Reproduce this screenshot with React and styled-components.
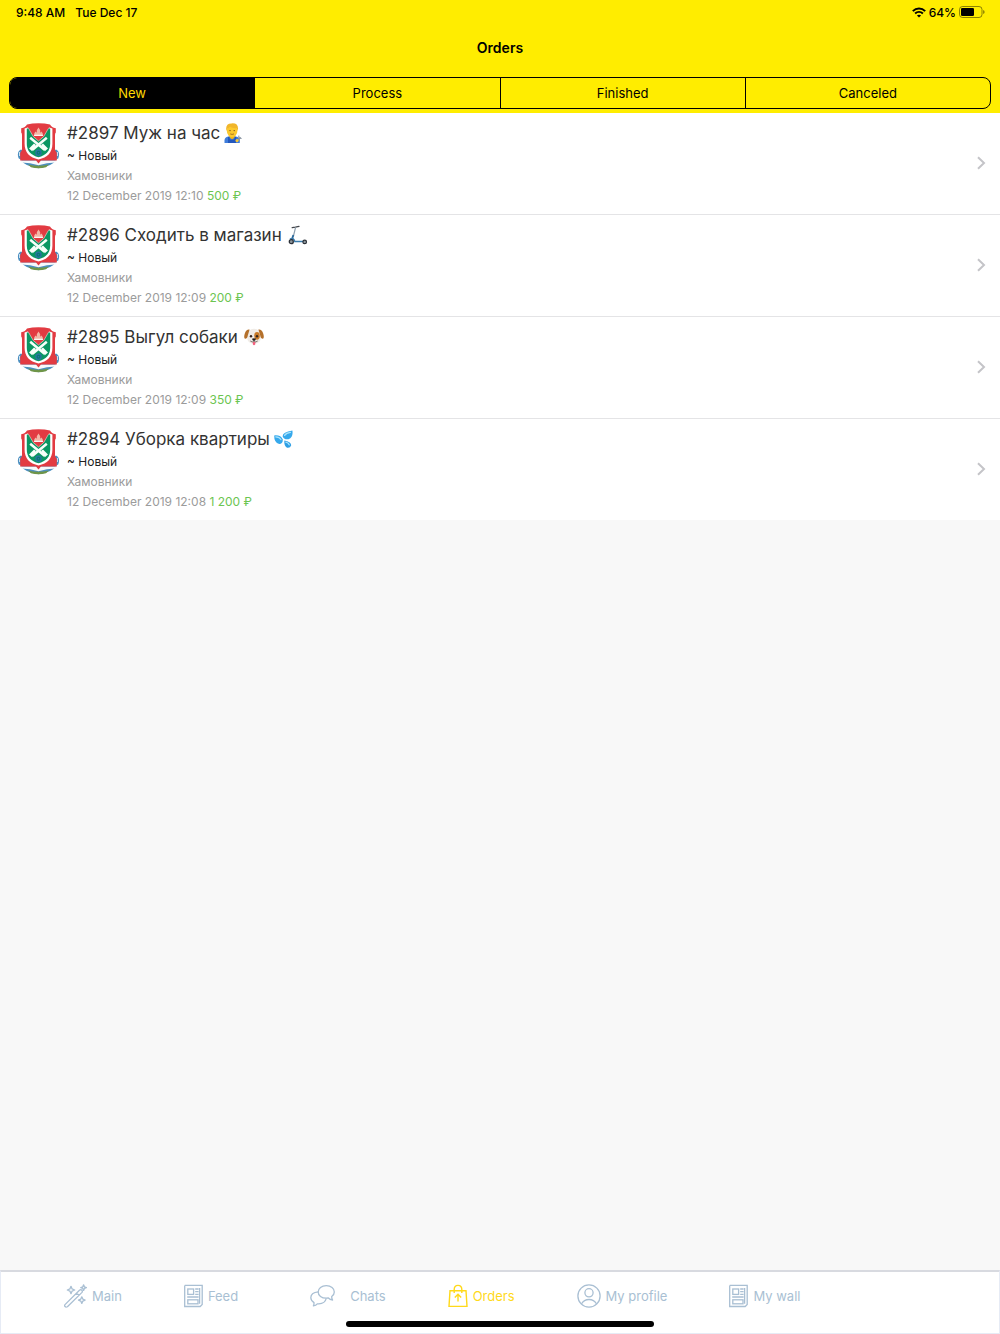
import React, { useState } from 'react';
import styled, { createGlobalStyle } from 'styled-components';

const GlobalStyle = createGlobalStyle`
    * {
        box-sizing: border-box;
    }

    body {
        margin: 0;
        font-family: Inter, "Noto Sans", sans-serif;
        background-color: #f8f8f8;
    }

    button {
        font-family: inherit;
        cursor: pointer;
    }
`

const Page = styled.div`
    min-height: 100vh;
    display: flex;
    flex-direction: column;
`

const Header = styled.header`
    background-color: #ffed00;
    color: black;
    padding-bottom: 4px;
`

const StatusBar = styled.div`
    display: flex;
    justify-content: space-between;
    align-items: center;
    height: 24px;
    padding: 0 15px 0 16px;
    font-size: 12px;
    font-weight: 500;

    div{
        display: flex;
        align-items: center;
        gap: 10px;
    }

    .indicators{
        gap: 3px;
    }
`

const Title = styled.h1`
    margin: 0;
    font-size: 14px;
    font-weight: 600;
    line-height: 48px;
    text-align: center;
`

const Segments = styled.div`
    display: flex;
    height: 32px;
    margin: 5px 9px 0;
    border: 1px solid black;
    border-radius: 8px;
    overflow: hidden;
`

const Segment = styled.button`
    flex: 1;
    padding: 0;
    border: none;
    border-right: ${(prop) => prop.$last ? 'none' : '1px solid black'};
    font-size: 13px;
    color: ${(prop) => prop.$active ? '#ffd800' : 'black'};
    background-color: ${(prop) => prop.$active ? 'black' : 'transparent'};
`

const OrderList = styled.ul`
    list-style: none;
    margin: 0;
    padding: 0;
    background-color: white;
`

const OrderRow = styled.li`
    display: flex;
    align-items: center;
    padding: 7px 14px 8px 17px;
    border-bottom: 1px solid #e4e4e6;

    &:last-child{
        border-bottom: none;
    }
`

const CrestBox = styled.div`
    align-self: flex-start;
    height: 48px;
    padding-top: 3px;
    margin-right: 7px;
`

const OrderInfo = styled.div`
    flex: 1;
    font-size: 12px;
    line-height: 20px;
    color: #9b9b9b;

    h2{
        display: flex;
        align-items: center;
        gap: ${(prop) => prop.$wide ? '6px' : '4px'};
        margin: 0;
        font-size: 17px;
        font-weight: 400;
        line-height: 26px;
        color: #333333;
    }

    p{
        margin: 0;
    }

    .status{
        color: #222222;
    }

    .price{
        color: #6cc551;
    }
`

const Footer = styled.footer`
    margin-top: auto;
    padding: 12px 0 6px;
    display: flex;
    flex-direction: column;
    align-items: center;
    gap: 13px;
    background-color: white;
    border: 1px solid #e6ebf5;
    border-top: 2px solid #d8dae0;
`

const TabBar = styled.nav`
    align-self: stretch;
    display: flex;
    gap: 62px;
    padding-left: 63px;
`

const Tab = styled.a`
    display: flex;
    align-items: center;
    gap: 5px;
    height: 24px;
    font-size: 13px;
    white-space: nowrap;
    text-decoration: none;
    color: ${(prop) => prop.$active ? '#ffd91a' : '#a9bfd3'};
`

const TabIcon = styled.span`
    display: flex;
    justify-content: center;
    width: ${(prop) => prop.$width}px;
`

const HomeIndicator = styled.div`
    width: 308px;
    max-width: 80%;
    height: 6px;
    border-radius: 3px;
    background-color: black;
`

const Wifi = () => (
    <svg width="14" height="11" viewBox="0 0 14 11" fill="none" stroke="black" strokeWidth="2">
        <path d="M0.8 4.1C4.4 0.6 9.6 0.6 13.2 4.1" />
        <path d="M3.1 6.5C5.4 4.4 8.6 4.4 10.9 6.5" />
        <path d="M7 10.6L4.9 8.5Q7 6.9 9.1 8.5Z" fill="black" stroke="none" />
    </svg>
)

const Battery = () => (
    <svg width="26" height="12" viewBox="0 0 26 12">
        <rect x="0.5" y="0.5" width="22.5" height="11" rx="3" fill="none" stroke="black" strokeOpacity="0.45" />
        <rect x="2" y="2" width="13" height="8" rx="1.3" fill="black" />
        <path d="M24.2 4Q25.6 4.6 25.6 6T24.2 8Z" fill="black" fillOpacity="0.5" />
    </svg>
)

const Chevron = () => (
    <svg width="10" height="14" viewBox="0 0 10 14" fill="none" stroke="#c4c4c8" strokeWidth="2">
        <path d="M2 1.3L8 7L2 12.7" />
    </svg>
)

const Crest = () => (
    <svg width="43" height="46" viewBox="0 0 43 46">
        <path d="M4 26.5C0.6 28 0.2 32 1.8 35.5L5 37V27ZM39 26.5C42.4 28 42.8 32 41.2 35.5L38 37V27Z" fill="#4c8fc0" />
        <path d="M2.6 29V33M40.4 29V33" stroke="#d9e9f3" strokeWidth="1" />
        <path d="M4 37Q8 43.5 21.5 45.2Q35 43.5 39 37Z" fill="#4c8fc0" />
        <path d="M11 41.5Q21 44 32 41.5L29 44.2Q21.5 46.2 14 44.2Z" fill="#6f9548" />
        <path d="M3.4 37.4H39.6L38.4 39.6Q30 40 21.5 42.2Q13 40 4.6 39.6Z" fill="#f7f9fb" />
        <path d="M10 1.6Q15 0.2 21.5 0.2T33 1.6Q34.5 4.6 38.8 5.2V9.5Q38 10.4 38 12V27Q40.4 29.5 39.8 33V37.4H24L21.5 40.5L19 37.4H3.2V33Q2.6 29.5 5 27V12Q5 10.4 4.2 9.5V5.2Q8.5 4.6 10 1.6Z" fill="#e23b42" />
        <path d="M7.6 5.5L10.6 4.6H32.4L35.4 5.5V20.5C35.4 29.5 30.4 34.6 21.5 36.4C12.6 34.6 7.6 29.5 7.6 20.5Z" fill="#fff" />
        <path d="M9.8 5.6H33.2V20.5C33.2 28 29 32.4 21.5 34.2C14 32.4 9.8 28 9.8 20.5Z" fill="#0b9662" />
        <path d="M10.6 3.6H32.4L26.8 13.4L21.5 18L16.2 13.4Z" fill="#e23b42" />
        <path d="M11.8 5.8L16.2 13.4L21.5 18L26.8 13.4L31.2 5.8" fill="none" stroke="#f3dfd9" strokeWidth="0.6" />
        <path d="M17.3 13V10.2L18.6 8.4L19.8 9.8V7.2L21.5 4.6L23.2 7.2V9.8L24.4 8.4L25.7 10.2V13Z" fill="#f3b8a8" />
        <path d="M17 12.3H26" stroke="#fff" strokeWidth="1.1" />
        <path d="M13.2 14.8L27.5 26.8M29.8 14.8L15.5 26.8" stroke="#f7fff9" strokeWidth="2.5" />
        <path d="M24 22L26 20.6L31 25.4L27.8 28.2ZM19 22L17 20.6L12 25.4L15.2 28.2Z" fill="#f7fff9" />
        <circle cx="21.5" cy="29.8" r="2.6" fill="#087a70" stroke="#2a73a2" strokeWidth="1.2" />
        <circle cx="21.5" cy="29.8" r="0.8" fill="#2c6fb0" />
    </svg>
)

const Handyman = () => (
    <svg width="18" height="20" viewBox="0 0 18 20" role="img" aria-label="handyman">
        <path d="M0.5 20V17Q1 14 5 13.6H11Q15.5 14 15.8 17V20Z" fill="#3f7ddb" />
        <path d="M5.4 12H10.8V14.3L8.1 16.5L5.4 14.3Z" fill="#eeb416" />
        <path d="M4 14L5.4 13.5L6 16.5H10.2L10.8 13.5L12.2 14V20H4Z" fill="#2458bd" />
        <ellipse cx="8.1" cy="7.8" rx="5.3" ry="6.4" fill="#fcc92e" />
        <path d="M2.4 8Q1 0.3 7.5 0.4Q15.3 -0.3 13.8 8L12.8 5.2Q8 5.5 6 3.8Q4.3 5.7 3.4 5.6Z" fill="#f1b62b" />
        <circle cx="6" cy="7.6" r="0.7" fill="#6b4516" />
        <circle cx="10.2" cy="7.6" r="0.7" fill="#6b4516" />
        <path d="M6.2 10.9Q8.1 12 10 10.9" fill="none" stroke="#96621b" strokeWidth="0.8" />
        <path d="M12.4 19.2L16.5 14.2" stroke="#8b96a3" strokeWidth="1.6" />
        <path d="M14.7 12.6L15 15L17.6 15.5" fill="none" stroke="#8b96a3" strokeWidth="1.1" />
        <circle cx="13" cy="17.5" r="1.5" fill="#fcc92e" />
    </svg>
)

const Scooter = () => (
    <svg width="20" height="20" viewBox="0 0 20 20" fill="none" role="img" aria-label="scooter">
        <path d="M4.2 2.6L7.4 2.1L11 1.4" stroke="#42464c" strokeWidth="1.3" strokeLinecap="round" />
        <path d="M7.6 2.3L5.2 12" stroke="#8fa0ae" strokeWidth="1.2" />
        <path d="M5.3 10L3.6 15.8" stroke="#2d6b9c" strokeWidth="1.8" />
        <path d="M2 14.2Q5.6 12.2 6.8 16.4H16" stroke="#3b7cad" strokeWidth="1.5" />
        <circle cx="3.3" cy="16.7" r="2" fill="#8e979d" stroke="#2c3138" strokeWidth="1.3" />
        <circle cx="16.7" cy="16.9" r="1.8" fill="#8e979d" stroke="#2c3138" strokeWidth="1.2" />
    </svg>
)

const Dog = () => (
    <svg width="20" height="18" viewBox="0 0 20 18" role="img" aria-label="dog">
        <path d="M10 0.7Q16.2 0.8 16.8 8Q17.6 15.5 10 15.8Q2.4 15.5 3.2 8Q3.8 0.8 10 0.7Z" fill="#f0ece7" />
        <path d="M5.6 1.5Q2.2 1 0.8 5.5Q-0.5 9.5 1 10.8Q3.2 11 3.8 7.5Z" fill="#b4702b" />
        <path d="M14.4 1.5Q17.8 1 19.2 5.5Q20.5 9.5 19 10.8Q16.8 11 16.2 7.5Z" fill="#b4702b" />
        <ellipse cx="13" cy="7.8" rx="2.8" ry="3.9" fill="#c77a28" />
        <circle cx="7" cy="8.2" r="1.2" fill="#332520" />
        <circle cx="13" cy="8.2" r="1.2" fill="#332520" />
        <path d="M8.8 14H11.3V16.3Q10 18.4 8.8 16.3Z" fill="#f2617e" />
        <path d="M6.3 13Q8.3 15 10 13Q11.7 15 13.7 13" fill="none" stroke="#4b3a33" strokeWidth="0.7" />
        <path d="M8 10.8Q10 9.7 12 10.8Q11.6 12.8 10 13Q8.4 12.8 8 10.8Z" fill="#1f1a1a" />
    </svg>
)

const Drops = () => (
    <svg width="19" height="18" viewBox="0 0 19 18" role="img" aria-label="drops">
        <path d="M18.4 0.6Q19.4 7.6 14.6 9.2Q9.6 9.8 8.6 6.2Q8.6 2.1 18.4 0.6Z" fill="#36a9ec" />
        <path d="M0.2 5.4Q7.2 4.9 8.8 9.6Q9 14 5.2 14Q0 12.6 0.2 5.4Z" fill="#36a9ec" />
        <path d="M10.4 10.4Q16.8 11.4 17.2 15.2Q16.2 18.4 13 17.7Q9.8 15.8 10.4 10.4Z" fill="#2d9fe5" />
        <path d="M16.4 2.4Q12.2 2.9 10.6 5.4M1.8 6.9Q5.9 7.3 6.9 9.6M11.9 12.2Q14.6 12.9 15.2 14.8" fill="none" stroke="#a8e2fb" strokeWidth="1.3" strokeLinecap="round" />
    </svg>
)

const WandIcon = () => (
    <svg width="23" height="24" viewBox="0 0 23 24" fill="none" stroke="currentColor" strokeWidth="1.3" strokeLinejoin="round">
        <path d="M1 20.6L15.7 6Q17 5.4 18 6.3Q18.7 7.4 18 8.4L3.4 22.7Q2 23.5 1 22.6Q0.2 21.6 1 20.6ZM12.6 9L15 11.5" />
        <path d="M7 2.3L8.1 4.9L10.7 6L8.1 7.1L7 9.7L5.9 7.1L3.3 6L5.9 4.9Z" />
        <path d="M19.6 0.8L20.4 2.8L22.4 3.6L20.4 4.4L19.6 6.4L18.8 4.4L16.8 3.6L18.8 2.8Z" />
        <path d="M17.8 12.8L18.8 15.1L21.1 16.1L18.8 17.1L17.8 19.4L16.8 17.1L14.5 16.1L16.8 15.1Z" />
    </svg>
)

const NewsIcon = () => (
    <svg width="19" height="24" viewBox="0 0 19 24" fill="none" stroke="currentColor" strokeWidth="1.3">
        <path d="M0.7 1.4H18.2V20.4L16.2 22.5H0.7V1.4M15.6 4V19.8" />
        <rect x="3.8" y="5" width="5.8" height="5.4" />
        <path d="M11.2 5H14.6M11.2 7.7H14.6M11.2 10.4H14.6M3.2 13H14.6" />
        <rect x="3.8" y="15.8" width="10.2" height="4" />
    </svg>
)

const ChatsIcon = () => (
    <svg width="25" height="24" viewBox="0 0 25 24" fill="none" stroke="currentColor" strokeWidth="1.3" strokeLinejoin="round">
        <path d="M16.3 1.6C11.6 1.6 8.2 4.3 8.2 7.9C8.2 11.6 11.6 14.2 16.3 14.2L18.4 14Q20 15.8 22.6 16Q21.5 14.3 21.7 12.5Q24.3 10.7 24.3 7.9C24.3 4.3 21 1.6 16.3 1.6Z" />
        <path d="M8.3 7.9C3.8 8.3 0.8 10.6 0.8 13.8Q0.9 16.8 4 18.6Q4.2 20.5 3.4 21.9Q6 21.6 7.3 19.8H8.8C12.7 19.8 15.7 17.5 16.2 14.4" />
    </svg>
)

const BagIcon = () => (
    <svg width="20" height="24" viewBox="0 0 20 24" fill="none" stroke="currentColor" strokeWidth="1.4">
        <path d="M2 6.7H18L19 22.4H1ZM6.2 9V5.6Q6.2 1.4 10 1.4T13.8 5.6V9" />
        <path d="M10 17.6V10.5M6.8 13.4L10 10.3L13.2 13.4" />
    </svg>
)

const ProfileIcon = () => (
    <svg width="24" height="24" viewBox="0 0 24 24" fill="none" stroke="currentColor" strokeWidth="1.3">
        <circle cx="12" cy="12" r="11.1" />
        <circle cx="12" cy="8.8" r="4.1" />
        <path d="M4.4 20Q7 15.5 12 15.5T19.6 20" />
    </svg>
)

const segments = ['New', 'Process', 'Finished', 'Canceled']

const orders = [
    { id: 2897, name: 'Муж на час', date: '12 December 2019 12:10', price: '500 ₽', Emoji: Handyman },
    { id: 2896, name: 'Сходить в магазин', date: '12 December 2019 12:09', price: '200 ₽', Emoji: Scooter, wide: true },
    { id: 2895, name: 'Выгул собаки', date: '12 December 2019 12:09', price: '350 ₽', Emoji: Dog, wide: true },
    { id: 2894, name: 'Уборка квартиры', date: '12 December 2019 12:08', price: '1 200 ₽', Emoji: Drops },
]

const tabs = [
    { name: 'Main', Icon: WandIcon, width: 23 },
    { name: 'Feed', Icon: NewsIcon, width: 19 },
    { name: 'Chats', Icon: ChatsIcon, width: 45 },
    { name: 'Orders', Icon: BagIcon, width: 20 },
    { name: 'My profile', Icon: ProfileIcon, width: 24 },
    { name: 'My wall', Icon: NewsIcon, width: 19 },
]

function App() {

    const [selected, setSelected] = useState('New')

    return (
        <Page>
            <GlobalStyle />

            <Header>
                <StatusBar>
                    <div>
                        <span>9:48 AM</span>
                        <span>Tue Dec 17</span>
                    </div>
                    <div className='indicators'>
                        <Wifi />
                        <span>64%</span>
                        <Battery />
                    </div>
                </StatusBar>

                <Title>Orders</Title>

                <Segments>
                    {segments.map((name, index) => (
                        <Segment
                            key={name}
                            $last={index === segments.length - 1}
                            $active={name === selected}
                            aria-pressed={name === selected}
                            onClick={() => setSelected(name)}
                        >
                            {name}
                        </Segment>
                    ))}
                </Segments>
            </Header>

            <OrderList>
                {orders.map(({ id, name, date, price, Emoji, wide }) => (
                    <OrderRow key={id}>
                        <CrestBox>
                            <Crest />
                        </CrestBox>
                        <OrderInfo $wide={wide}>
                            <h2>#{id} {name} <Emoji /></h2>
                            <p className='status'>~ Новый</p>
                            <p>Хамовники</p>
                            <p>{date} <span className='price'>{price}</span></p>
                        </OrderInfo>
                        <Chevron />
                    </OrderRow>
                ))}
            </OrderList>

            <Footer>
                <TabBar>
                    {tabs.map(({ name, Icon, width }) => (
                        <Tab key={name} href="#" $active={name === 'Orders'}>
                            <TabIcon $width={width}>
                                <Icon />
                            </TabIcon>
                            {name}
                        </Tab>
                    ))}
                </TabBar>
                <HomeIndicator />
            </Footer>
        </Page>
    );
}

export default App;
